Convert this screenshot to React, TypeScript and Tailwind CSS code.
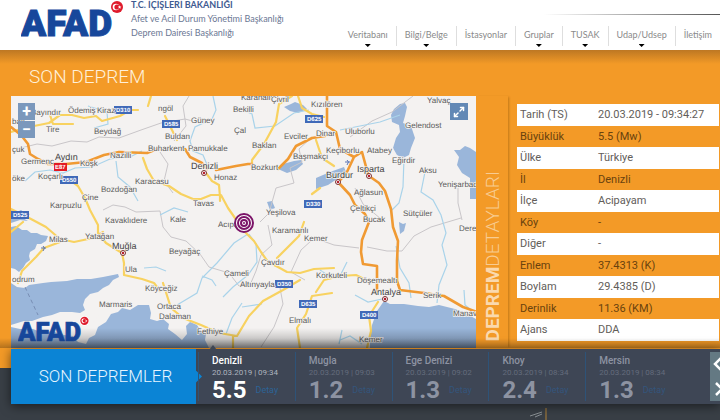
import clsx from "clsx";
import { Maximize2 } from "lucide-react";

const NAV = [
  { label: "Veritabanı", menu: true },
  { label: "Bilgi/Belge", menu: true },
  { label: "İstasyonlar", menu: false },
  { label: "Gruplar", menu: true },
  { label: "TUSAK", menu: true },
  { label: "Udap/Udsep", menu: true },
  { label: "İletişim", menu: false },
];

const DETAILS = [
  ["Tarih (TS)", "20.03.2019 - 09:34:27"],
  ["Büyüklük", "5.5 (Mw)"],
  ["Ülke", "Türkiye"],
  ["İl", "Denizli"],
  ["İlçe", "Acipayam"],
  ["Köy", "-"],
  ["Diğer", "-"],
  ["Enlem", "37.4313 (K)"],
  ["Boylam", "29.4385 (D)"],
  ["Derinlik", "11.36 (KM)"],
  ["Ajans", "DDA"],
];

const QUAKES = [
  { place: "Denizli", date: "20.03.2019 | 09:34", mag: "5.5" },
  { place: "Mugla", date: "20.03.2019 | 09:03", mag: "1.2" },
  { place: "Ege Denizi", date: "20.03.2019 | 09:02", mag: "1.3" },
  { place: "Khoy", date: "20.03.2019 | 08:34", mag: "2.4" },
  { place: "Mersin", date: "20.03.2019 | 08:34", mag: "1.3" },
];

type Place = [name: string, x: number, y: number];

const TOWNS: Place[] = [
  ["Bayındır", 31, 115], ["Ödemiş", 68, 113], ["Kiraz", 97, 113], ["balı", 12, 124],
  ["Tire", 46, 132], ["Beydağ", 94, 134], ["çuk", 12, 152], ["Nazilli", 110, 158],
  ["Köşk", 80, 166], ["Germenc", 21, 164], ["Koçarlı", 38, 179], ["öke", 12, 181],
  ["Bozdoğan", 101, 192], ["Çine", 82, 200], ["Karpuzlu", 50, 208], ["Karacasu", 135, 184],
  ["ngöl", 158, 111], ["Güney", 191, 123], ["Bekilli", 233, 112], ["Karahallı", 241, 100],
  ["Çivril", 271, 102], ["Buldan", 165, 139], ["Buharkent", 148, 151], ["Pamukkale", 188, 151],
  ["Çal", 234, 133], ["Baklan", 252, 148], ["Evciler", 284, 139], ["Başmakçı", 293, 159],
  ["Bozkurt", 251, 170], ["Honaz", 214, 180], ["Tavas", 193, 206], ["Kale", 170, 222],
  ["Yeşilova", 266, 215], ["Kızılören", 311, 107], ["Dinar", 316, 136], ["Uluborlu", 345, 134],
  ["Keçiborlu", 326, 153], ["Atabey", 367, 153], ["Gelendost", 405, 128], ["Eğirdir", 392, 163],
  ["Aksu", 419, 173], ["Yalvaç", 427, 103], ["Yenişarbad", 438, 187], ["Ağlasun", 354, 195],
  ["Çeltikçi", 350, 211], ["Bucak", 363, 222], ["Sütçüler", 403, 216], ["Dere", 459, 231],
  ["Kavaklıdere", 105, 223], ["Yatağan", 85, 239], ["Milas", 49, 242], ["Ula", 125, 272],
  ["odrum", 12, 282], ["Marmaris", 99, 307], ["Köyceğiz", 145, 291], ["Beyağaç", 169, 254],
  ["Acıpa", 218, 227], ["Karamanlı", 272, 233], ["Kemer", 304, 241], ["Çavdır", 261, 265],
  ["Çameli", 224, 276], ["Altınyayla", 240, 287], ["Ortaca", 157, 309], ["Dalaman", 159, 319],
  ["Fethiye", 197, 334], ["Elmalı", 289, 323], ["Korkuteli", 316, 278], ["Döşemealtı", 357, 283],
  ["Serik", 423, 298], ["Manav", 453, 316], ["Kemer", 359, 342],
];

const CITIES: Place[] = [
  ["Aydın", 55, 160], ["Denizli", 191, 169], ["Isparta", 357, 172],
  ["Burdur", 326, 178], ["Muğla", 112, 249], ["Antalya", 371, 295],
];

const SHIELDS: Place[] = [
  ["D310", 115, 107], ["D585", 163, 121], ["D625", 306, 116], ["D330", 305, 201],
  ["D550", 61, 177], ["D525", 12, 212], ["D350", 276, 281], ["D635", 300, 301], ["D400", 361, 312],
];

const CITY_DOTS = [[204, 173], [338, 182], [369, 176], [123, 253], [385, 299]];

// the wordmark with a crescent and star on a red disc, used in the header and on the map
function Logo({ className }: { className?: string }) {
  return (
    <svg viewBox="0 0 104 48" className={className} role="img" aria-label="AFAD">
      <text x="0" y="36" fontSize="37" fontWeight="900" fill="#17479b" stroke="#17479b" strokeWidth="1" className="font-['Roboto',sans-serif]">
        AFAD
      </text>
      <circle cx="96" cy="7" r="7" fill="#fff" />
      <circle cx="96" cy="7" r="6" fill="#df1b2c" />
      <circle cx="95" cy="7" r="3.3" fill="#fff" />
      <circle cx="96" cy="7" r="2.6" fill="#df1b2c" />
      <path d="M98.600 5.300l.5 1.200 1.300.1-1 .8.3 1.300-1.100-.7-1.100.7.3-1.300-1-.8 1.300-.1z" fill="#fff" />
    </svg>
  );
}

function QuakeMap() {
  return (
    <svg
      viewBox="11 96 465 252"
      preserveAspectRatio="xMidYMid slice"
      textRendering="geometricPrecision"
      className="block w-full font-['Liberation_Sans',sans-serif]"
      role="img"
      aria-label="Son deprem haritası"
    >
      <defs>
        <linearGradient id="map-shade" x1="0" y1="0" x2="0" y2="1">
          <stop offset="0" stopColor="#000" stopOpacity="0" />
          <stop offset="1" stopColor="#000" stopOpacity="0.32" />
        </linearGradient>
      </defs>
      <rect x="11" y="96" width="465" height="252" fill="#f4f2f1" />

      {/* seas and lakes */}
      <g fill="#9ab6da">
        <path d="M11 209l6 3 4-2 4 3 5 1-7 4 5 3-8-1-9 3z" />
        <path d="M11 227l5-1 6 4 5 0 4 3 6 0 4 2 7 1-2 5-5 3-4 0-2 5-5 3-1 4 1 4-4 3-3 5-4 4-4-3-4-1z" />
        <path d="M11 283l6 4 8 1 4-3 14-2 8-1 16-1 10-2 14 0 12-2 15-3 1 3-6 3-4 5-6 3-5 4-8 2-5 5-2 6 2 5-5 3-8-1-12 0-8 3-9 2-11 4-8 0-13 4z" />
        <path d="M11 327l9 2 13 0 10 4 9-2 12 4 9 1 5 6 8 2 3-6 6-3 3-8 8-5 5-8 7-2 4-4 8 2 8-5 11 0 2 8-1 6 7 2 6-2 6 5-1 5 7 5 7 6 5-6-1-8 4-4 7 3 4 6 5 3-1 6 4 8H11z" />
        <path d="M370 348l0-10 2-13 5-14 7-10 6 3 14 0 14 2 11 1 10-2 16 4 10 4 11 6v29z" />
        <path d="M400 104l5-1 2 4-2 9-2 7 8 3 4 12-4 10-2 7-6 3-6-3-4-7 3-10 4-6-1-7-7-3-1-7 3-6z" />
        <path d="M454 150l6 0 5-4 5 2 6 4v47h-6v-21l-8-5-5-8 2-8z" />
        <path d="M278 169l5-5 11-3 7-1 2 4-7 6-9 3zM316 178l14-6 14-5 2 5-9 7-9 6-12 4zM284 107l7-3 4-2 8 3 4 4-9 4-8-2zM267 202l5-1 3 7-5 2zM399 222l4 2 3-1-2 8-4 3z" />
      </g>
      <path d="M82 338l4-4 5-10 6-5-3-7 4 2 2 9-6 9-8 8z" fill="#f4f2f1" />

      {/* district borders */}
      <g fill="none" stroke="#c9c6c9" strokeWidth="1">
        <path d="M17 149l20-5 15 2 19-5 16 1 12-5 20 1 22-8 20-7 24-4 15 4M103 210l10-5 12 2 11 5 24-1 3 16 8 10 15 4 14 13 9 13 20 6 10 13 11-1 6-14 5-16 11-10-4-20M160 152l8 12-4 17 9 12M189 96l-6 10 3 20-12 15M350 137l22-16 20-9 21-16M312 137l-13 12 3 13-12 6 4 15-18 5-7 25-9 9M355 188l8 16 18 15M312 240l-11 10-10 22 14 8M367 247l20 4 15 0 12-15 17-9 30-9M280 288l3 16-9 23-13 20M458 188v15l4 17M320 240l14 5 25 3" />
      </g>

      {/* rivers */}
      <g fill="none" stroke="#a9d3ea" strokeWidth="1.2">
        <path d="M25 181l10-9 15-2 13 3 12-5 17-1 18-8 22-3 10-5M88 106l19 6 1 12-14 4M213 96l3 14-4 9-17 8-5 14 3 10 10 4 5 12M240 109l12 5 3 14 20-2 19-13 15-3M116 161l2 16 12 10 8 14M248 234l-14 9-17 20-15 15-5 15-20 12M249 234l7 10 1 18-9 13-15 12-10 10M242 303l-10 15-6 16M242 307l20-3M340 130l40-8 20-7M404 158l-1 29-4 16-7 7M425 172l-4 20 12 8 8 15 5 18-4 12 5 20-8 20-2 18M396 246l4 22 9 15 2 15M340 340l10-4 12 8M342 330l-3 14M347 262l-6 12M320 270l12 8M160 215l14-7 14 4M144 268l12-1 10 4M202 276l10 4 4 6M355 295l13 7 14-3M464 290l1 15 6 5" />
      </g>

      {/* secondary roads */}
      <g fill="none" stroke="#f8d260" strokeWidth="2.200" strokeLinejoin="round" strokeLinecap="round">
        <path d="M11 132l18-5 20-4 11-8 12 0 12 3 12-2 6 5 18-5 10-6 8 0M50 115l3 9 20 0M148 106l3-10M66 177l12 9 7 12 5 12 8 15 0 8 8 10 16 10 2 10 0 12 18 4 12 4 6 8M165 116l12 24M143 158l4 11 7 12 15 5 12 8 12 5 8 0 10-4 10 0 7 13 16 23 10 10 7 11 7 10 10 5 9 5 13 1 14-4 20-1M206 173l6 8 7 4 1 12 0 4M292 96l-13 8-3 18-12 22-12 16v8M298 96l4 12 10 6 12 3M304 222l-5 14-22 22M316 140l6 18 12 8M11 209l20 10 15 8 14 12 14 3 19-4 10-6M60 242l-16 6-8 9-14 14-4 12M163 283l8 25 12 10 18 7 18 8 18 3 12-20 14-15 20-11 17-10M233 336v12M300 348l-3-20 9-14 6-18 20-3M316 292l8-12 16-4 16-1 12 6M378 302l-9 14 2 15-4 17M11 232l12-10M320 188l-8 6" />
      </g>

      {/* main roads */}
      <g fill="none" stroke="#f09a33" strokeWidth="2.600" strokeLinejoin="round" strokeLinecap="round">
        <path d="M11 127l10 8 7 9 2 10 8 5 10 5 18 0 20-2 18-7 15-3 28 1 10-4M185 149l5 8 12 6 5 6M216 170l20-4 12-2 4 0M278 169l10-10 8-13 16-8 13-2M327 96v30l9 6 4 17 14 8 8-5 6 22M354 157l-8 17-8 8M338 182l12 13 5 10 10 9 4 8-7 18-1 12 2 12 14 2v26M369 176l10 7 6 8 6 18 2 18 5 14-1 20 0 20 3 9 24 3 20 3 19 11 22 8" />
      </g>
      <path d="M25 287l13 28" stroke="#788eb4" strokeWidth="1" strokeDasharray="4 3" />

      {SHIELDS.map(([name, x, y]) => (
        <g key={name}>
          <rect x={x - 1} y={y - 1} width="18" height="8" fill="#4069b8" />
          <text x={x + 1} y={y + 5} fontSize="6" fontWeight="700" fill="#fff">{name}</text>
        </g>
      ))}
      <g stroke="#f4f2f1" strokeWidth="1.5" paintOrder="stroke" fill="#5a5a5a" fontSize="8">
        {TOWNS.map(([name, x, y]) => (
          <text key={`${name}-${x}`} x={x} y={y}>{name}</text>
        ))}
      </g>
      <g stroke="#f4f2f1" strokeWidth="1.5" paintOrder="stroke" fill="#444" fontSize="9">
        {CITIES.map(([name, x, y]) => (
          <text key={name} x={x} y={y}>{name}</text>
        ))}
      </g>
      <rect x="54" y="163" width="13" height="8" fill="#e31b23" />
      <text x="55" y="169" fontSize="6" fontWeight="700" fill="#fff">E87</text>

      {CITY_DOTS.map(([x, y]) => (
        <g key={x}>
          <circle cx={x} cy={y} r="2.500" fill="#fff" stroke="#7b3030" strokeWidth="1" />
          <circle cx={x} cy={y} r="1.200" fill="#b61b28" />
        </g>
      ))}
      <g stroke="#5a74b4" strokeWidth="1">
        <path d="M345 162h5M347 160l1.500 2-1.500 3M41 248h5M43 246l1.500 2-1.500 3" fill="none" />
      </g>

      {/* epicentre */}
      <g fill="none" stroke="#7b1468" strokeWidth="2">
        <circle cx="244" cy="223" r="9" fill="#fff" />
        <circle cx="244" cy="223" r="6" />
        <circle cx="244" cy="223" r="3" />
      </g>
      <circle cx="244" cy="223" r="1" fill="#7b1468" />

      <rect x="11" y="328" width="465" height="20" fill="url(#map-shade)" />
    </svg>
  );
}

function Header() {
  return (
    <header className="relative flex h-[50px] justify-between bg-white">
      <div className="flex items-start pl-[21px]">
        <Logo className="w-[104px]" />
        <div className="pl-[6px] font-['Lato',sans-serif] text-[9px] leading-[14px] text-[#6b7794]">
          <p className="-mt-[2px] font-bold text-[#3f5b91]">T.C. İÇİŞLERİ BAKANLIĞI</p>
          <p>Afet ve Acil Durum Yönetimi Başkanlığı</p>
          <p>Deprem Dairesi Başkanlığı</p>
        </div>
      </div>
      <nav className="flex items-end pb-[4px] font-['Lato',sans-serif]">
        {NAV.map(({ label, menu }) => (
          <a
            key={label}
            href="#"
            className="relative flex h-[20px] justify-center border-l border-[#dedede] px-[8px] text-[9px] leading-[18px] text-[#8a8a8a] first:border-l-0"
          >
            {label}
            {menu && (
              <span className="absolute -bottom-[1px] h-[3px] w-[6px] bg-black [clip-path:polygon(0_0,100%_0,50%_100%)]" />
            )}
          </a>
        ))}
      </nav>
      <div className="absolute right-0 top-[14px] h-px w-[176px] bg-linear-to-r from-transparent to-[#555]" />
    </header>
  );
}

function DetailPanel() {
  return (
    <aside className="flex w-[244px] shrink-0">
      <div className="flex w-[32px] items-end justify-center pb-[7px] pl-[2px] shadow-[2px_0_2px_-1px_rgba(120,70,0,0.4)]">
        <h2 className="rotate-180 text-[19px] leading-[20px] text-[#f8cc92] [writing-mode:vertical-rl]">
          <b className="text-[#fad9ae]">DEPREM</b>
          <span className="font-light">DETAYLARI</span>
        </h2>
      </div>
      <div className="flex-1 pl-[9px] pr-px pt-[8px]">
        <table className="w-full border-collapse text-left text-[11px] leading-[14px]">
          <tbody>
            {DETAILS.map(([label, value]) => (
              <tr key={label} className="h-[22px] text-[#625d59] odd:bg-white even:h-[21px] even:text-[#69420e]">
                <th scope="row" className="w-[81px] p-0 pl-[3px] font-normal">{label}</th>
                <td className="p-0">{value}</td>
              </tr>
            ))}
          </tbody>
        </table>
      </div>
    </aside>
  );
}

function RecentBar() {
  return (
    <section className="relative -mt-[19px] ml-[11px] flex h-[55px] bg-[#3e4655] shadow-[0_2px_10px_rgba(0,0,0,0.55)]">
      <div className="relative flex w-[185px] shrink-0 items-center justify-center bg-[#0b84d5]">
        <h2 className="pl-[4px] text-[17px] font-light text-[#e6f5ff]">SON DEPREMLER</h2>
        <span className="absolute -right-[6px] h-[12px] w-[6px] bg-[#0b84d5] [clip-path:polygon(0_0,100%_50%,0_100%)]" />
      </div>
      <ul className="flex flex-1 py-[3px] pl-[2px] pr-[38px]">
        {QUAKES.map(({ place, date, mag }, i) => (
          <li
            key={place}
            className={clsx("relative flex-1 border-l border-[#2e5378] pl-[13px] pt-[3px]", i === 0 ? "text-white" : "text-[#8d93a2]")}
          >
            {i === 0 && (
              <span className="absolute -top-[7px] left-[10px] h-[5px] w-[8px] bg-[#3e4655] [clip-path:polygon(50%_0,100%_100%,0_100%)]" />
            )}
            <p className="text-[10px] font-medium leading-[12px]">{place}</p>
            <p className={clsx("whitespace-nowrap text-[8px] leading-[11px]", i === 0 ? "text-[#aeb4bf]" : "text-[#646c7c]")}>{date}</p>
            <div className="flex items-center gap-[9px]">
              <span className="text-[24px] font-bold leading-[24px]">{mag}</span>
              <a href="#" className={clsx("text-[9px] leading-[14px]", i === 0 ? "text-[#2c6395]" : "text-[#34557c]")}>Detay</a>
            </div>
          </li>
        ))}
      </ul>
      <div className="absolute right-0 top-[3px] flex h-[49px] w-[10px] flex-col overflow-hidden bg-[#647983]">
        <button aria-label="Önceki" className="flex h-1/2 items-center">
          <svg viewBox="0 0 10 24" className="h-6 w-[10px] shrink-0" fill="none" stroke="#fff" strokeWidth="2.500">
            <path d="M11 6L5 12l6 6" />
          </svg>
        </button>
        <button aria-label="Sonraki" className="flex h-1/2 items-center">
          <svg viewBox="0 0 10 24" className="h-6 w-[10px] shrink-0" fill="none" stroke="#fff" strokeWidth="2.500">
            <path d="M6 6l6 6-6 6" />
          </svg>
        </button>
      </div>
    </section>
  );
}

export default function App() {
  return (
    <div className="min-h-screen overflow-hidden bg-[#393f46] font-['Roboto',sans-serif]">
      <Header />
      <main>
        <section className="relative bg-[#f39a27] pb-[20px] pl-[11px]">
          <div className="absolute inset-x-0 top-0 h-[14px] bg-linear-to-b from-[#bd7723] to-transparent" />
          <h1 className="pb-[5px] pl-[18px] pt-[13px] text-[19px] font-light leading-[28px] text-[#fff0da]">SON DEPREM</h1>
          <div className="flex">
            <div className="relative min-w-0 flex-1">
              <QuakeMap />
              <div className="absolute left-[7px] top-[7px] flex flex-col gap-px">
                <button aria-label="Yakınlaştır" className="h-[17px] w-[17px] bg-[#7b98bc] text-[16px] font-bold leading-[17px] text-white">+</button>
                <button aria-label="Uzaklaştır" className="h-[17px] w-[17px] bg-[#7b98bc] text-[16px] font-bold leading-[17px] text-white">−</button>
              </div>
              <button aria-label="Tam ekran" className="absolute right-[8px] top-[7px] grid h-[17px] w-[18px] place-items-center bg-[#6288b5] text-white">
                <Maximize2 size={12} strokeWidth={3} />
              </button>
              <Logo className="absolute -bottom-[1px] left-[7px] w-[72px]" />
            </div>
            <DetailPanel />
          </div>
          <div className="absolute inset-x-0 bottom-[20px] h-[10px] bg-linear-to-b from-transparent to-black/25" />
        </section>
        <RecentBar />
      </main>
      <footer className="flex justify-center pl-[358px] pt-[4px]">
        <svg viewBox="0 0 18 12" className="h-3 w-[18px]" fill="none">
          <path d="M0 8l12-4M5 9l7-3" stroke="#8a9094" />
          <path d="M16 0v12" stroke="#b18237" />
        </svg>
      </footer>
    </div>
  );
}
